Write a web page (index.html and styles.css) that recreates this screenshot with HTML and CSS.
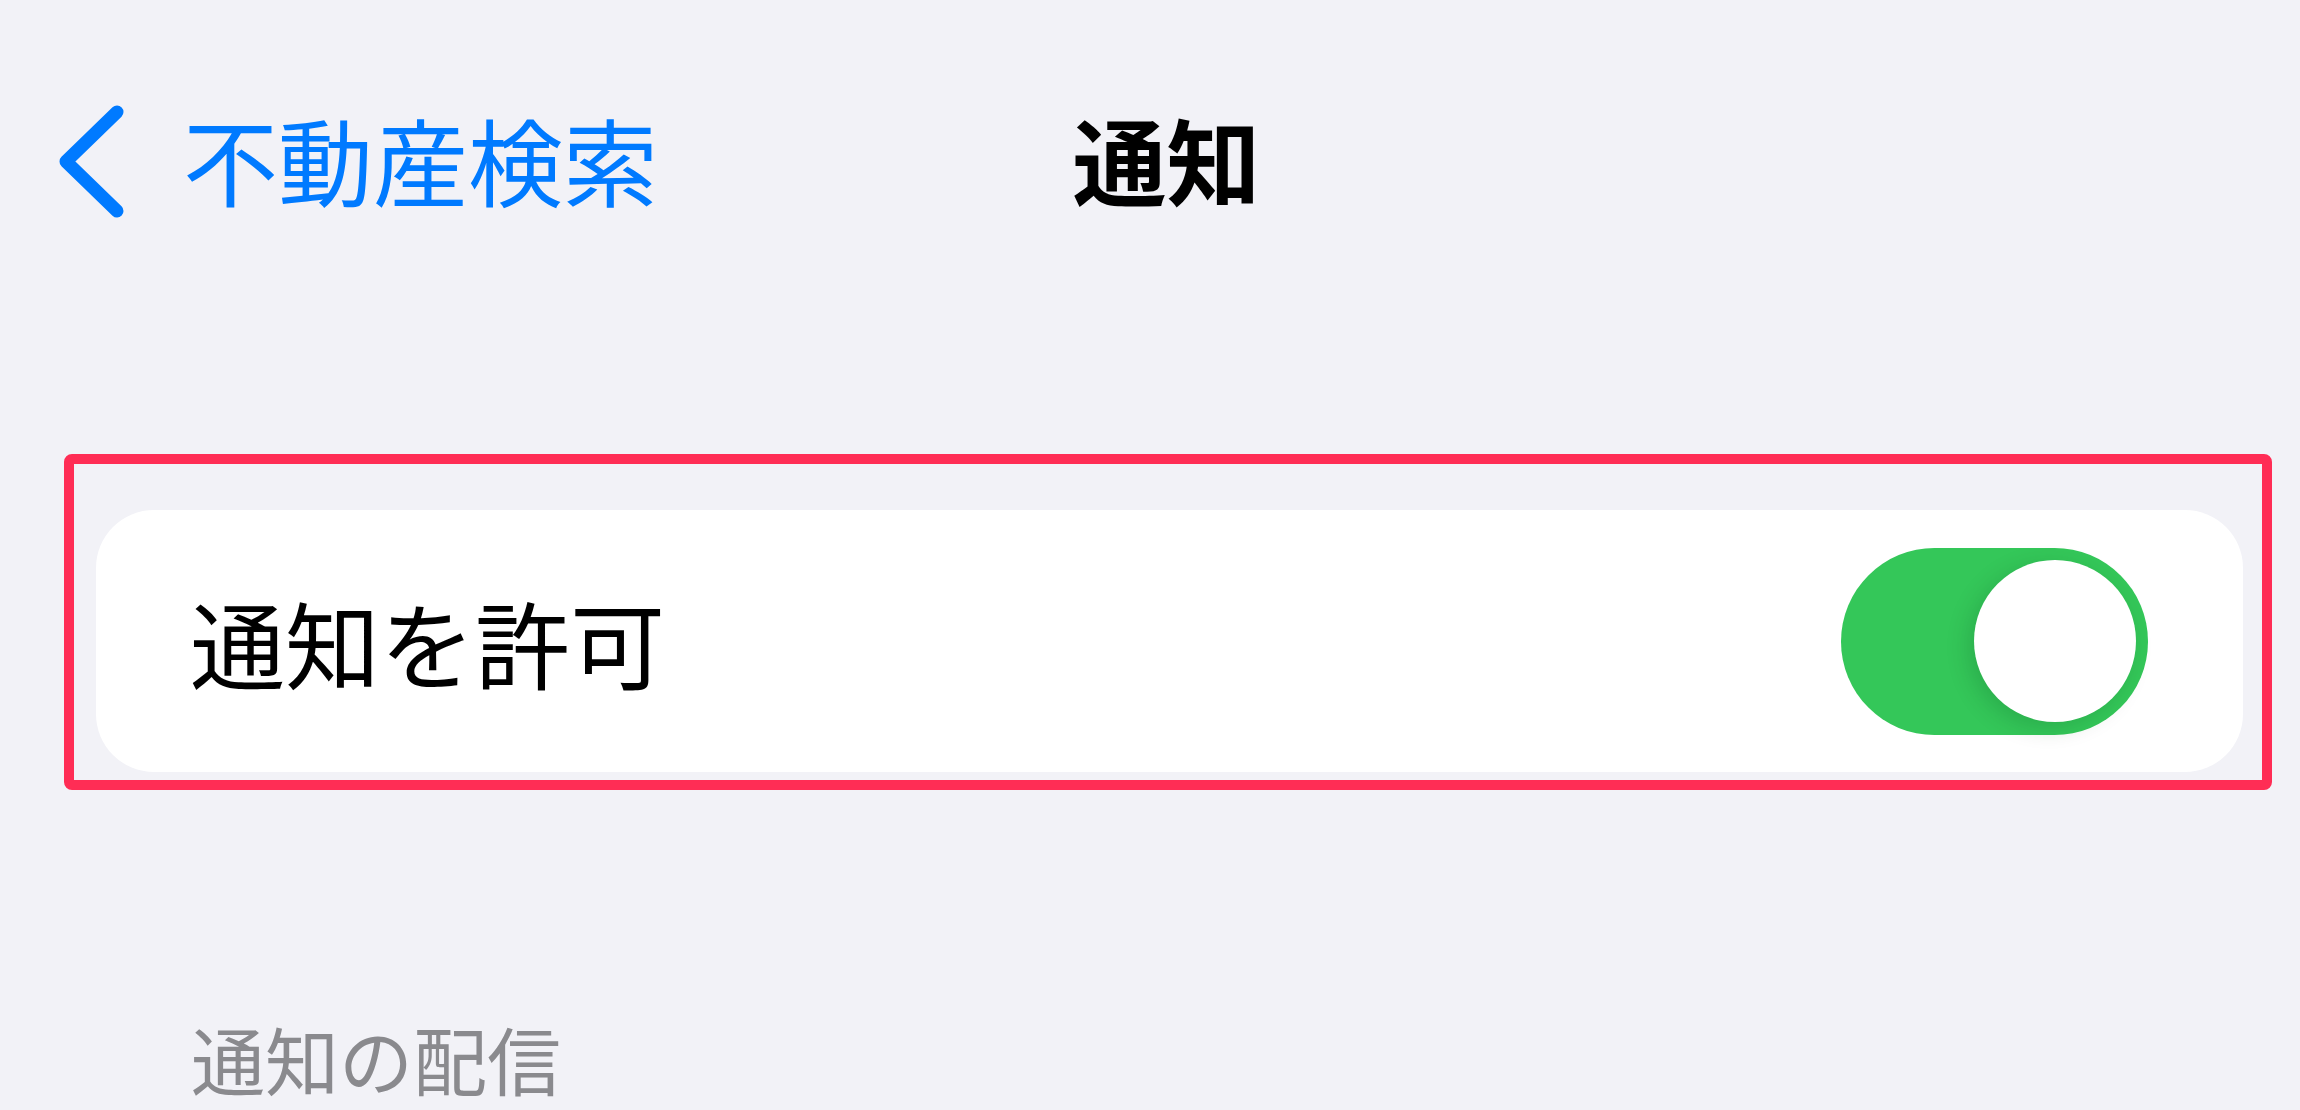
FILE: index.html
```html
<!DOCTYPE HTML>
<html lang="ja">
  <head>
    <title>通知</title>
    <meta charset="utf-8">
    <link rel="stylesheet" href="styles.css">
  </head>
  <body>

  <div class="nav">
    <a class="back" href="#">
      <svg class="chevron" width="70" height="115" viewBox="0 0 70 115">
        <path d="M61 8 L10 57.5 L61 107" fill="none" stroke="#007aff" stroke-width="13" stroke-linecap="round" stroke-linejoin="round"/>
      </svg>
      <span class="back-text">不動産検索</span>
    </a>
    <div class="title">通知</div>
  </div>

  <!-- highlighted row -->
  <div class="highlight">
    <div class="card">
      <span class="label">通知を許可</span>
      <div class="toggle on">
        <div class="knob"></div>
      </div>
    </div>
  </div>

  <div class="section-header">通知の配信</div>

  </body>
</html>
```

FILE: styles.css
```css
html {
  height: 100%;
}
body {
  margin: 0;
  padding: 0;
  background: #f2f2f7;
  color: #000;
  font-family: "Noto Sans CJK JP", sans-serif;
  height: 100%;
}

.nav {
  display: grid;
  grid-template-columns: 1fr auto 1fr;
  align-items: center;
  height: 115px;
  padding: 104px 23px 0 56px;
}

.back {
  display: flex;
  align-items: center;
  gap: 57px;
  color: #007aff;
  font-size: 95px;
  line-height: 1;
  text-decoration: none;
}

.back-text {
  margin-bottom: 7px;
}

.chevron {
  display: block;
}

.title {
  margin-bottom: 8px;
  font-size: 94px;
  font-weight: 700;
  line-height: 1;
}

.highlight {
  margin: 235px 28px 0 64px;
  border: 10px solid #ff2d55;
  border-radius: 8px;
  padding: 46px 19px 8px 22px;
}

.card {
  display: flex;
  align-items: center;
  justify-content: space-between;
  height: 262px;
  padding: 0 95px 0 94px;
  background: #fff;
  border-radius: 58px;
}

.label {
  font-size: 95px;
  line-height: 1;
}

.toggle {
  display: flex;
  align-items: center;
  justify-content: flex-start;
  box-sizing: border-box;
  width: 307px;
  height: 187px;
  padding: 0 12px;
  border-radius: 94px;
  background: #e9e9ea;
}
.toggle.on {
  justify-content: flex-end;
  background: #34c759;
}

.knob {
  width: 162px;
  height: 162px;
  border-radius: 50%;
  background: #fff;
  box-shadow: -6px 6px 22px rgba(0, 60, 20, 0.18);
}

.section-header {
  margin: 231px 0 0 191px;
  color: #8a8a8e;
  font-size: 74px;
  line-height: 1;
}
```
